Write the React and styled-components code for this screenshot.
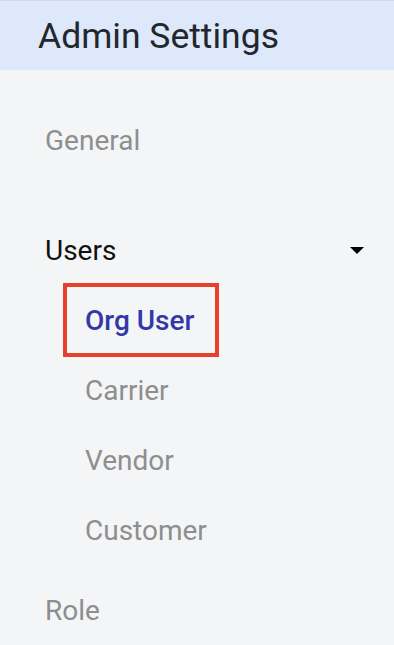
import React from "react";
import styled, { createGlobalStyle } from "styled-components";

const Global = createGlobalStyle`
  html, body { margin: 0; padding: 0; background: #f4f5f7; }
  body { font-family: Roboto, "Liberation Sans", Arial, sans-serif; }
`;

const Page = styled.div`
  width: 394px;
  min-height: 645px;
  background: #f4f5f7;
`;

const Header = styled.header`
  height: 70px;
  box-sizing: border-box;
  border-top: 1px solid #d2dbea;
  background: #dde8fa;
  display: flex;
  align-items: center;
  padding-left: 38px;
`;

const Title = styled.h1`
  margin: 0;
  font-size: 35.5px;
  font-weight: 400;
  color: #23262c;
`;

const Nav = styled.nav`
  display: flex;
  flex-direction: column;
  padding-top: 35px;
`;

const Item = styled.div`
  height: 70px;
  display: flex;
  align-items: center;
  justify-content: space-between;
  padding: 0 30px 0 45px;
  font-size: 28px;
  color: ${(p) => (p.$dark ? "#111" : "#8e8e8e")};
  margin-top: ${(p) => p.$gap || 0}px;
`;

const Caret = styled.span`
  width: 0;
  height: 0;
  border-left: 7.5px solid transparent;
  border-right: 7.5px solid transparent;
  border-top: 7.5px solid #000;
`;

const SubList = styled.div`
  display: flex;
  flex-direction: column;
  align-items: flex-start;
  padding-left: 63px;
`;

const SubItem = styled.div`
  height: 70px;
  display: flex;
  align-items: center;
  padding-left: 22px;
  font-size: 28px;
  color: #8e8e8e;
`;

const ActiveSubItem = styled.div`
  height: 74px;
  box-sizing: border-box;
  margin: -2px 0;
  display: flex;
  align-items: center;
  border: 4px solid #e8402a;
  padding: 0 21px 0 18px;
  font-size: 28px;
  font-weight: 500;
  color: #3338a8;
`;

export default function App() {
  return (
    <Page>
      <Global />
      <Header>
        <Title>Admin Settings</Title>
      </Header>
      <Nav>
        <Item>General</Item>
        <Item $dark $gap={40}>
          Users
          <Caret />
        </Item>
        <SubList>
          <ActiveSubItem>Org User</ActiveSubItem>
          <SubItem>Carrier</SubItem>
          <SubItem>Vendor</SubItem>
          <SubItem>Customer</SubItem>
        </SubList>
        <Item $gap={10}>Role</Item>
      </Nav>
    </Page>
  );
}
